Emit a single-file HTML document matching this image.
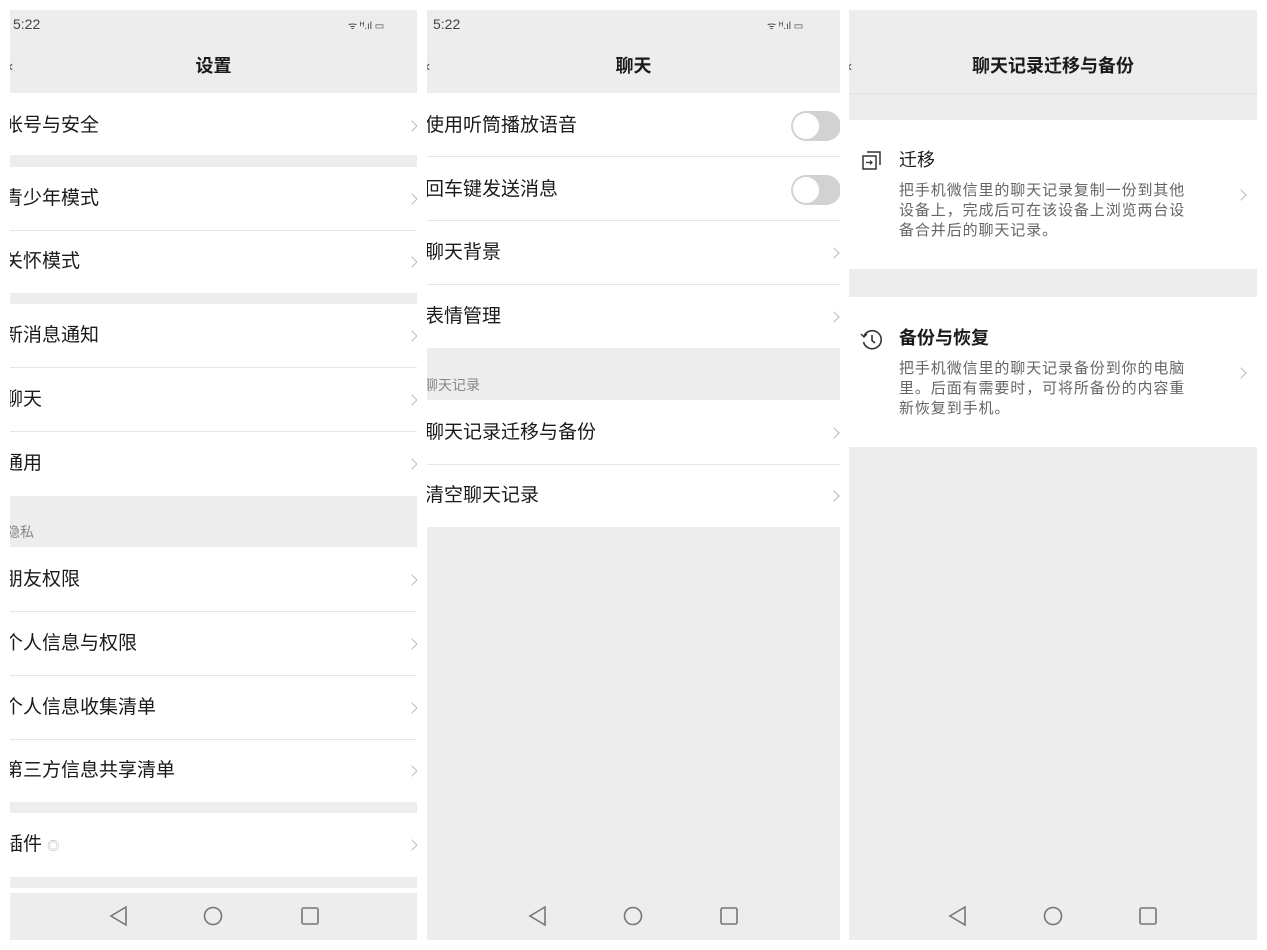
<!DOCTYPE html>
<html><head><meta charset="utf-8"><style>
*{margin:0;padding:0;box-sizing:border-box}
body{width:1267px;height:950px;background:#fff;position:relative;overflow:hidden;font-family:"Liberation Sans","Noto Sans CJK SC",sans-serif;color:#1a1a1a}
.p{position:absolute;top:10px;height:930px;background:#ededed;overflow:hidden}
.a{position:absolute}
.w{position:absolute;left:0;right:0;background:#fff}
.t{position:absolute;font-size:19px;line-height:20px}
.ln{position:absolute;height:1px;background:#e6e6e6}
.ch{position:absolute;width:8px;height:8px;border-top:1.3px solid #b8b8b8;border-right:1.3px solid #b8b8b8;transform:rotate(45deg)}
.st{position:absolute;top:6px;font-size:14px;color:#444}
.tt{position:absolute;top:46px;left:0;right:0;text-align:center;font-size:18px;font-weight:bold;line-height:20px}
.sec{position:absolute;font-size:14px;color:#888}
.tg{position:absolute;width:50px;height:30px;border-radius:15px;background:#d2d2d2}
.tg:before{content:"";position:absolute;left:2px;top:2px;width:26px;height:26px;border-radius:13px;background:#fff}
.d{position:absolute;left:50px;font-size:15px;line-height:20px;color:#666;width:292px;letter-spacing:0.9px}
</style></head><body>

<!-- panel 1 -->
<div class="p" style="left:10px;width:407px">
<div class="st" style="left:3px">5:22</div>
<div class="st" style="left:338px;font-size:10px;top:8px">ᯤ ᴴ.ıl ▭</div>
<div class="a" style="left:-2px;top:48px;font-size:16px;color:#555">‹</div>
<div class="tt">设置</div>
<div class="w" style="top:83px;height:62px"></div><div class="t" style="left:-6px;top:106px">帐号与安全</div><div class="ch" style="left:398px;top:112px"></div>
<div class="w" style="top:157px;height:126px"></div>
<div class="t" style="left:-6px;top:179px">青少年模式</div><div class="ch" style="left:398px;top:185px"></div>
<div class="ln" style="left:0;right:0;top:220px"></div>
<div class="t" style="left:-6px;top:242px">关怀模式</div><div class="ch" style="left:398px;top:248px"></div>
<div class="w" style="top:294px;height:192px"></div>
<div class="t" style="left:-6px;top:316px">新消息通知</div><div class="ch" style="left:398px;top:322px"></div>
<div class="ln" style="left:0;right:0;top:357px"></div>
<div class="t" style="left:-6px;top:380px">聊天</div><div class="ch" style="left:398px;top:386px"></div>
<div class="ln" style="left:0;right:0;top:421px"></div>
<div class="t" style="left:-6px;top:444px">通用</div><div class="ch" style="left:398px;top:450px"></div>
<div class="sec" style="left:-4px;top:512px">隐私</div>
<div class="w" style="top:537px;height:255px"></div>
<div class="t" style="left:-6px;top:560px">朋友权限</div><div class="ch" style="left:398px;top:566px"></div>
<div class="ln" style="left:0;right:0;top:601px"></div>
<div class="t" style="left:-6px;top:624px">个人信息与权限</div><div class="ch" style="left:398px;top:630px"></div>
<div class="ln" style="left:0;right:0;top:665px"></div>
<div class="t" style="left:-6px;top:688px">个人信息收集清单</div><div class="ch" style="left:398px;top:694px"></div>
<div class="ln" style="left:0;right:0;top:729px"></div>
<div class="t" style="left:-6px;top:751px">第三方信息共享清单</div><div class="ch" style="left:398px;top:757px"></div>
<div class="w" style="top:803px;height:64px"></div>
<div class="t" style="left:-6px;top:825px">插件 <span style="font-size:12px;color:#aaa">◎</span></div><div class="ch" style="left:398px;top:831px"></div>
<div class="w" style="top:878px;height:5px"></div>
<svg class="a" style="left:0;top:883px" width="407" height="47"><path d="M116 14 L101 23 L116 32Z" fill="none" stroke="#777" stroke-width="1.6"/><circle cx="203" cy="23" r="8.5" fill="none" stroke="#777" stroke-width="1.6"/><rect x="292" y="15" width="16" height="16" rx="1.5" fill="none" stroke="#777" stroke-width="1.6"/></svg>
</div>

<!-- panel 2 -->
<div class="p" style="left:427px;width:413px">
<div class="st" style="left:6px">5:22</div>
<div class="st" style="left:340px;font-size:10px;top:8px">ᯤ ᴴ.ıl ▭</div>
<div class="a" style="left:-2px;top:48px;font-size:16px;color:#555">‹</div>
<div class="tt">聊天</div>
<div class="w" style="top:83px;height:255px"></div>
<div class="t" style="left:-2px;top:106px">使用听筒播放语音</div><div class="tg" style="left:364px;top:101px"></div>
<div class="ln" style="left:0;right:0;top:146px"></div>
<div class="t" style="left:-2px;top:170px">回车键发送消息</div><div class="tg" style="left:364px;top:165px"></div>
<div class="ln" style="left:0;right:0;top:210px"></div>
<div class="t" style="left:-2px;top:233px">聊天背景</div><div class="ch" style="left:403px;top:239px"></div>
<div class="ln" style="left:0;right:0;top:274px"></div>
<div class="t" style="left:-2px;top:297px">表情管理</div><div class="ch" style="left:403px;top:303px"></div>
<div class="sec" style="left:-3px;top:365px">聊天记录</div>
<div class="w" style="top:390px;height:127px"></div>
<div class="t" style="left:-2px;top:413px">聊天记录迁移与备份</div><div class="ch" style="left:403px;top:419px"></div>
<div class="ln" style="left:0;right:0;top:454px"></div>
<div class="t" style="left:-2px;top:476px">清空聊天记录</div><div class="ch" style="left:403px;top:482px"></div>
<svg class="a" style="left:0;top:883px" width="413" height="47"><path d="M118 14 L103 23 L118 32Z" fill="none" stroke="#777" stroke-width="1.6"/><circle cx="206" cy="23" r="8.5" fill="none" stroke="#777" stroke-width="1.6"/><rect x="294" y="15" width="16" height="16" rx="1.5" fill="none" stroke="#777" stroke-width="1.6"/></svg>
</div>

<!-- panel 3 -->
<div class="p" style="left:849px;width:408px">
<div class="a" style="left:-2px;top:48px;font-size:16px;color:#555">‹</div>
<div class="tt">聊天记录迁移与备份</div>
<div class="ln" style="left:0;right:0;top:83px;background:#e2e2e2"></div>
<div class="w" style="top:110px;height:149px"></div>
<svg class="a" style="left:12px;top:140px" width="22" height="22"><rect x="2" y="6" width="13" height="13" fill="none" stroke="#333" stroke-width="1.5"/><path d="M6 2 H19 V15" fill="none" stroke="#333" stroke-width="1.5"/><path d="M5 12.5 H11 M9 10.5 L11 12.5 L9 14.5" fill="none" stroke="#333" stroke-width="1.2"/></svg>
<div class="t" style="left:50px;top:140px;font-size:18px">迁移</div>
<div class="d" style="top:171px">把手机微信里的聊天记录复制一份到其他设备上，完成后可在该设备上浏览两台设备合并后的聊天记录。</div>
<div class="ch" style="left:388px;top:181px"></div>
<div class="w" style="top:287px;height:150px"></div>
<svg class="a" style="left:11px;top:318px" width="24" height="24"><path d="M4 8 A9 9 0 1 1 3.5 14" fill="none" stroke="#333" stroke-width="1.6"/><path d="M1 6 L4 9 L7 6" fill="none" stroke="#333" stroke-width="1.4"/><path d="M12 7 V12.5 L15 15" fill="none" stroke="#333" stroke-width="1.6"/></svg>
<div class="t" style="left:50px;top:318px;font-size:18px;font-weight:bold">备份与恢复</div>
<div class="d" style="top:349px">把手机微信里的聊天记录备份到你的电脑里。后面有需要时，可将所备份的内容重新恢复到手机。</div>
<div class="ch" style="left:388px;top:359px"></div>
<svg class="a" style="left:0;top:883px" width="408" height="47"><path d="M116 14 L101 23 L116 32Z" fill="none" stroke="#777" stroke-width="1.6"/><circle cx="204" cy="23" r="8.5" fill="none" stroke="#777" stroke-width="1.6"/><rect x="291" y="15" width="16" height="16" rx="1.5" fill="none" stroke="#777" stroke-width="1.6"/></svg>
</div>
</body></html>
